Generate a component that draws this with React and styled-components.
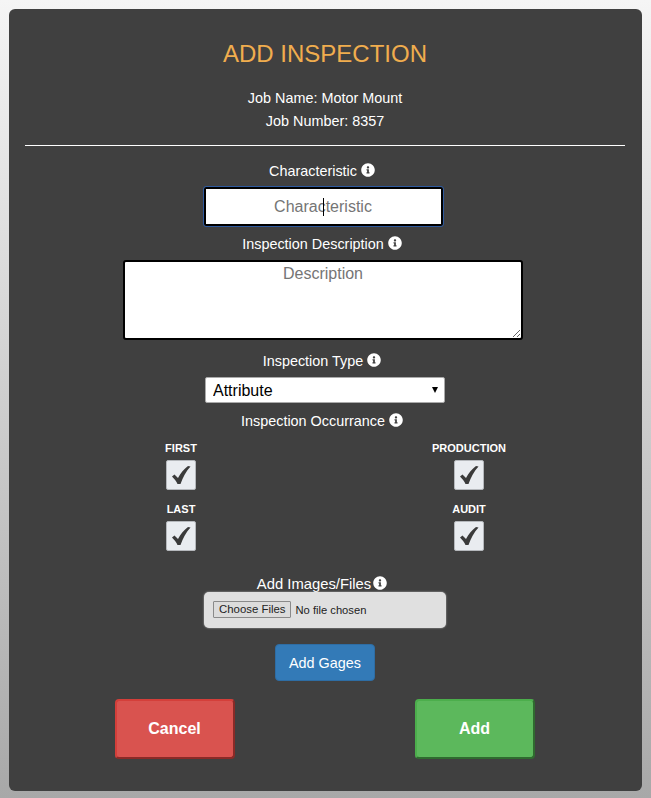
import React from "react";
import styled, { createGlobalStyle } from "styled-components";
import { FaInfoCircle } from "react-icons/fa";

const GlobalStyle = createGlobalStyle`
  html, body {
    margin: 0;
    padding: 0;
    min-height: 100%;
  }
  body {
    font-family: "Liberation Sans", Arial, sans-serif;
    background: linear-gradient(to bottom, #f5f5f5, #a8a8a8);
    background-repeat: no-repeat;
    min-height: 798px;
  }
  * {
    box-sizing: border-box;
  }
`;

const Page = styled.div`
  padding: 9px 9px 7px;
  height: 798px;
`;

const Panel = styled.div`
  height: 782px;
  background-color: #404040;
  border-radius: 6px;
  padding: 0 17px 0 16px;
  display: flex;
  flex-direction: column;
  align-items: center;
  color: #fff;
`;

const Title = styled.h1`
  margin: 30px 0 0;
  font-size: 24px;
  font-weight: 400;
  line-height: 30px;
  color: #f0ad4e;
`;

const JobLine = styled.div`
  font-size: 14.4px;
  line-height: 23px;
  margin-top: ${props => props.top || 0}px;
`;

const Divider = styled.hr`
  width: 100%;
  height: 1px;
  border: none;
  background-color: #fff;
  margin: 12px 0 0;
`;

const Label = styled.div`
  display: flex;
  align-items: center;
  justify-content: center;
  gap: ${props => props.gap || 4}px;
  font-size: ${props => props.size || 14.4}px;
  line-height: 20px;
  margin-top: ${props => props.top || 0}px;
  padding-right: 6px;
  svg {
    font-size: 14px;
    margin-top: -3px;
  }
`;

const InputWrap = styled.div`
  position: relative;
  margin: 6px 4px 0 0;
`;

const TextInput = styled.input`
  display: block;
  width: 239px;
  height: 39px;
  border: 2px solid #000;
  border-radius: 2px;
  outline: 1px solid #2f5a9e;
  outline-offset: 0;
  background: #fff;
  font-family: inherit;
  font-size: 16px;
  text-align: center;
  &::placeholder {
    color: #757575;
    opacity: 1;
  }
`;

const Caret = styled.span`
  position: absolute;
  left: 119px;
  top: 11px;
  width: 1px;
  height: 18px;
  background-color: #000;
`;

const TextArea = styled.textarea`
  display: block;
  width: 400px;
  height: 80px;
  margin: 6px 4px 0 0;
  border: 2px solid #000;
  border-radius: 3px;
  outline: none;
  background: #fff;
  padding: 3px 2px 2px;
  font-family: inherit;
  font-size: 16px;
  text-align: center;
  &::placeholder {
    color: #757575;
    opacity: 1;
  }
`;

const SelectWrap = styled.div`
  position: relative;
  margin-top: 6px;
  &::after {
    content: "";
    position: absolute;
    right: 7px;
    top: 10px;
    border-left: 3px solid transparent;
    border-right: 3px solid transparent;
    border-top: 6px solid #000;
  }
`;

const Select = styled.select`
  display: block;
  width: 240px;
  height: 26px;
  appearance: none;
  background: #fff;
  border: 1px solid #aaa;
  border-radius: 2px;
  font-family: inherit;
  font-size: 16px;
  color: #000;
  padding-left: 7px;
`;

const CheckGrid = styled.div`
  display: grid;
  grid-template-columns: 150px 150px;
  justify-content: center;
  column-gap: 138px;
  row-gap: 12px;
  margin-top: 10px;
  width: 100%;
`;

const CheckItem = styled.div`
  display: flex;
  flex-direction: column;
  align-items: center;
`;

const CheckName = styled.div`
  font-size: 11px;
  font-weight: 700;
  line-height: 14px;
  margin-bottom: 5px;
`;

const CheckBox = styled.div`
  width: 30px;
  height: 30px;
  background-color: #e9ecf0;
  border: 1px solid #b5b8bc;
  border-radius: 2px;
  display: flex;
  align-items: center;
  justify-content: center;
`;

const FileBox = styled.div`
  width: 242px;
  height: 36px;
  margin-top: -2px;
  background-color: #e0e0e0;
  border-radius: 5px;
  box-shadow: 0 0 2px #bbb;
  display: flex;
  align-items: center;
  padding: 0 0 2px 9px;
  input {
    font-family: inherit;
    font-size: 11.2px;
    color: #222;
  }
  input::file-selector-button {
    height: 17px;
    padding: 0 5px;
    margin-right: 4px;
    background-color: #dcdcdc;
    border: 1px solid #8a8a8a;
    border-radius: 1px;
    font-family: inherit;
    font-size: 11.4px;
    color: #222;
  }
`;

const GagesButton = styled.button`
  width: 100px;
  height: 37px;
  margin-top: 16px;
  padding: 0;
  background-color: #337ab7;
  border: 1px solid #2e6da4;
  border-radius: 4px;
  color: #fff;
  font-family: inherit;
  font-size: 14.4px;
`;

const Actions = styled.div`
  display: flex;
  justify-content: center;
  gap: 180px;
  margin: 18px 1px 0 0;
`;

const ActionButton = styled.button`
  width: 120px;
  height: 60px;
  border-radius: 4px;
  border: 2px solid ${props => (props.danger ? "#d43f3a" : "#4cae4c")};
  border-right-color: ${props => (props.danger ? "#8a2a27" : "#2f6b2f")};
  border-bottom-color: ${props => (props.danger ? "#8a2a27" : "#2f6b2f")};
  background-color: ${props => (props.danger ? "#d9534f" : "#5cb85c")};
  color: #fff;
  font-family: inherit;
  font-size: 16px;
  font-weight: 700;
`;

const CheckMark = () => (
  <svg width="20" height="20" viewBox="0 0 20 20">
    <path d="M1 11.5 L3.5 9.5 L7 13 C9.5 8 13 4 17 1 L19.5 1.5 C15 6.5 12 12 9.5 19 L6.5 19 C5.5 16.5 3 13.5 1 11.5 Z" fill="#3a3a3a" />
  </svg>
);

const occurrences = ["FIRST", "PRODUCTION", "LAST", "AUDIT"];

export default function App() {
  return (
    <Page>
      <GlobalStyle />
      <Panel>
        <Title>ADD INSPECTION</Title>
        <JobLine top={18}>Job Name: Motor Mount</JobLine>
        <JobLine>Job Number: 8357</JobLine>
        <Divider />
        <Label top={15}>Characteristic <FaInfoCircle /></Label>
        <InputWrap>
          <TextInput placeholder="Characteristic" />
          <Caret />
        </InputWrap>
        <Label top={8}>Inspection Description <FaInfoCircle /></Label>
        <TextArea placeholder="Description" />
        <Label top={11}>Inspection Type <FaInfoCircle /></Label>
        <SelectWrap>
          <Select defaultValue="Attribute">
            <option>Attribute</option>
            <option>Variable</option>
          </Select>
        </SelectWrap>
        <Label top={8}>Inspection Occurrance <FaInfoCircle /></Label>
        <CheckGrid>
          {occurrences.map(name => (
            <CheckItem key={name}>
              <CheckName>{name}</CheckName>
              <CheckBox><CheckMark /></CheckBox>
            </CheckItem>
          ))}
        </CheckGrid>
        <Label top={23} size={14.8} gap={2}>Add Images/Files <FaInfoCircle /></Label>
        <FileBox><input type="file" multiple /></FileBox>
        <GagesButton>Add Gages</GagesButton>
        <Actions>
          <ActionButton danger>Cancel</ActionButton>
          <ActionButton>Add</ActionButton>
        </Actions>
      </Panel>
    </Page>
  );
}
